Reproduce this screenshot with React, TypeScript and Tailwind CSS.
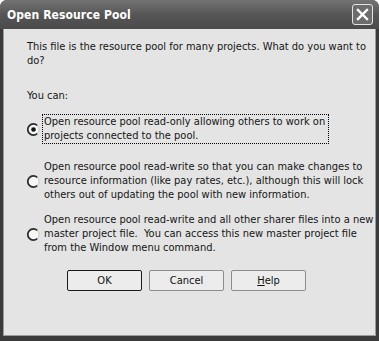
import React from 'react';

const font = { fontFamily: '"DejaVu Sans Condensed", "DejaVu Sans", sans-serif' };

const Radio: React.FC<{ checked?: boolean }> = ({ checked }) => (
  <svg width="13" height="13" viewBox="0 0 13 13" className="shrink-0">
    <circle cx="6.5" cy="6.5" r="5.6" fill="#f6f6f6" stroke="#c4c4c4" strokeWidth="1" />
    <path d="M10.2 2.4 A5.6 5.6 0 1 0 10.2 10.6" fill="none" stroke="#2c2c2c" strokeWidth="1.7" />
    {checked && <circle cx="6.5" cy="6.5" r="2.3" fill="#141414" />}
  </svg>
);

const Option: React.FC<{ lines: string[]; checked?: boolean; focused?: boolean; className?: string }> = ({
  lines,
  checked,
  focused,
  className = '',
}) => (
  <div className={`flex items-center ${className}`}>
    <Radio checked={checked} />
    <div
      className={`ml-[2px] pl-[1px] pr-[3px] leading-[14px] ${
        focused ? 'border border-dotted border-black' : 'border border-transparent'
      }`}
    >
      {lines.map((l) => (
        <div key={l} className="whitespace-pre">
          {l}
        </div>
      ))}
    </div>
  </div>
);

const Button: React.FC<{ children: React.ReactNode; primary?: boolean }> = ({ children, primary }) => (
  <button
    className={`w-[75px] h-[21px] rounded-[2px] bg-[#ececec] text-[11px] text-[#111] ${
      primary ? 'border border-[#1a1a1a]' : 'border border-[#8c8c8c]'
    }`}
  >
    {children}
  </button>
);

export default function App() {
  return (
    <div className="w-[379px] h-[341px] bg-[#3a3a3a] flex flex-col rounded-t-[7px] overflow-hidden" style={font}>
      {/* title bar */}
      <div className="h-[29px] flex items-center justify-between pl-[7px] pr-[6px] bg-gradient-to-b from-[#747474] via-[#565656] to-[#4a4a4a]">
        <span className="text-white font-bold text-[12px] tracking-[0.1px]">Open Resource Pool</span>
        <div className="w-[21px] h-[21px] rounded-[3px] border border-[#e4e4e4] bg-[#6c6c6c] flex items-center justify-center">
          <svg width="13" height="13" viewBox="0 0 13 13">
            <path d="M2 2 L11 11 M11 2 L2 11" stroke="#fff" strokeWidth="2.4" strokeLinecap="square" />
          </svg>
        </div>
      </div>

      {/* body */}
      <div className="flex-1 mx-[3px] mb-[5px] bg-[#e4e4e4] border-l border-r border-b border-[#9a9a9a] pl-[23px] pt-[11px] text-[11px] text-[#151515] leading-[14px]">
        <p className="whitespace-pre">{'This file is the resource pool for many projects. What do you want to\ndo?'}</p>
        <p className="mt-[21px]">You can:</p>

        <Option
          className="mt-[11px]"
          checked
          focused
          lines={['Open resource pool read-only allowing others to work on', 'projects connected to the pool.']}
        />
        <Option
          className="mt-[15px]"
          lines={[
            'Open resource pool read-write so that you can make changes to',
            'resource information (like pay rates, etc.), although this will lock',
            'others out of updating the pool with new information.',
          ]}
        />
        <Option
          className="mt-[9px]"
          lines={[
            'Open resource pool read-write and all other sharer files into a new',
            'master project file.  You can access this new master project file',
            'from the Window menu command.',
          ]}
        />

        <div className="mt-[14px] flex gap-[7px] pl-[40px]">
          <Button primary>OK</Button>
          <Button>Cancel</Button>
          <Button>
            <span className="underline">H</span>elp
          </Button>
        </div>
      </div>
    </div>
  );
}
